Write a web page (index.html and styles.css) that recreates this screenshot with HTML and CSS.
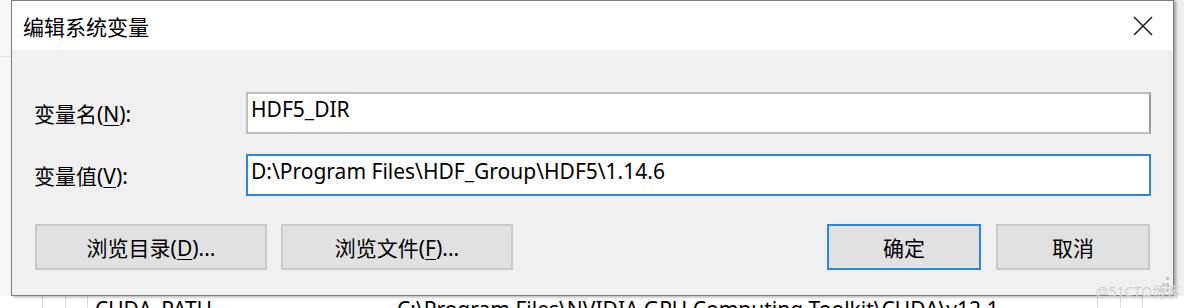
FILE: index.html
```html
<!DOCTYPE html>
<html lang="zh-CN">
<head>
<meta charset="utf-8">
<title>编辑系统变量</title>
<link rel="stylesheet" href="styles.css">
</head>
<body>
<div class="desk">
  <div class="side"></div>
  <div class="dialog">
    <div class="titlebar">
      <span class="title">编辑系统变量</span>
      <span class="close">
        <svg width="20" height="20" viewBox="0 0 20 20"><path d="M1 1 L19 19 M19 1 L1 19" stroke="#1a1a1a" stroke-width="1.5" fill="none"/></svg>
      </span>
    </div>
    <div class="body">
      <div class="form">
        <label class="lbl">变量名(<u>N</u>):</label>
        <div class="field">HDF5_DIR</div>
        <label class="lbl">变量值(<u>V</u>):</label>
        <div class="field focused">D:\Program Files\HDF_Group\HDF5\1.14.6</div>
      </div>
      <div class="buttons">
        <button class="btn wide">浏览目录(<u>D</u>)...</button>
        <button class="btn wide">浏览文件(<u>F</u>)...</button>
        <span class="spacer"></span>
        <button class="btn narrow default">确定</button>
        <button class="btn narrow">取消</button>
      </div>
    </div>
    <svg class="grip" width="12" height="16" viewBox="0 0 12 16">
      <rect x="8" y="0" width="3" height="3" fill="#c4c4c4"/>
      <rect x="8" y="6" width="3" height="3" fill="#c4c4c4"/>
      <rect x="4" y="6" width="3" height="3" fill="#c4c4c4"/>
      <rect x="8" y="12" width="3" height="3" fill="#c4c4c4"/>
      <rect x="4" y="12" width="3" height="3" fill="#c4c4c4"/>
      <rect x="0" y="12" width="3" height="3" fill="#c4c4c4"/>
    </svg>
    <span class="watermark">@51CTO博客</span>
  </div>
  <div class="gap"></div>
</div>
<div class="list-row">
  <span class="cell c1"></span>
  <span class="cell c2"></span>
  <span class="cell c3"></span>
  <span class="name">CUDA_PATH</span>
  <span class="value">C:\Program Files\NVIDIA GPU Computing Toolkit\CUDA\v12.1</span>
  <span class="cell c4"></span>
  <span class="cell c5"></span>
  <span class="cell c6"></span>
</div>
</body>
</html>
```
FILE: styles.css
```css
* { box-sizing: border-box; }
html, body {
  margin: 0;
  padding: 0;
  width: 1184px;
  height: 308px;
  overflow: hidden;
  background: #f4f4f4;
  font-family: "Noto Sans", "Noto Sans CJK SC", sans-serif;
  color: #000;
}
.desk {
  display: flex;
  height: 296px;
}
.side {
  width: 11px;
  background: #f7f7f7;
  background-image: linear-gradient(#e4e4e4, #e4e4e4);
  background-size: 100% 1px;
  background-position: 0 56px;
  background-repeat: no-repeat;
}
.gap {
  flex: 1;
  background: #efefef;
}
.dialog {
  position: relative;
  width: 1163px;
  height: 296px;
  border: 1px solid #7d7d7d;
  background: #f0f0f0;
  box-shadow: 2px 1px 3px rgba(0,0,0,0.35);
  display: flex;
  flex-direction: column;
  z-index: 1;
}
.titlebar {
  height: 49px;
  background: #fff;
  display: flex;
  align-items: center;
  padding-left: 11px;
  padding-right: 20px;
}
.title {
  font-size: 21px;
  flex: 1;
  color: #000;
}
.close {
  display: flex;
  width: 20px;
  height: 20px;
}
.body {
  padding: 42px 21px 0 22px;
}
.form {
  display: grid;
  grid-template-columns: 212px 905px;
  row-gap: 20px;
  align-items: center;
}
.lbl {
  font-size: 21px;
  line-height: 26px;
  padding-top: 2px;
}
u { text-underline-offset: 3px; text-decoration-thickness: 1px; }
.field {
  height: 42px;
  background: #fff;
  border: 2px solid #bdbdbd;
  border-right-color: #9d9d9d;
  font-size: 21px;
  line-height: 30px;
  padding: 0 3px;
  white-space: nowrap;
}
.field.focused {
  border: 2px solid #2589e3;
}
.buttons {
  display: flex;
  margin-top: 28px;
  padding-left: 1px;
  padding-right: 2px;
  height: 46px;
}
.btn {
  height: 46px;
  background: #e1e1e1;
  border: 2px solid #c9c9c9;
  font-family: inherit;
  font-size: 21px;
  color: #000;
  padding: 0;
  margin: 0;
}
.btn.wide { width: 232px; }
.btn.wide + .btn.wide { margin-left: 14px; }
.btn.narrow { width: 154px; }
.btn.narrow + .btn.narrow { margin-left: 15px; }
.btn.default { border-color: #2589e3; }
.spacer { flex: 1; }
.grip {
  position: absolute;
  right: 3px;
  bottom: 2px;
}
.watermark {
  position: absolute;
  left: 1084px;
  top: 283px;
  font-size: 14px;
  line-height: 16px;
  color: #cdcdcd;
  white-space: nowrap;
  text-shadow: 0 0 1px #fff;
}
.list-row {
  position: relative;
  height: 12px;
  background: #fff;
  overflow: hidden;
  display: flex;
  font-size: 21px;
  line-height: 21px;
  padding-top: 3px;
  white-space: nowrap;
  color: #000;
}
.cell {
  position: absolute;
  top: 0;
  bottom: 0;
  width: 1px;
  background: #d9d9d9;
}
.c1 { left: 42px; }
.c2 { left: 65px; }
.c3 { left: 87px; }
.c4 { left: 1097px; }
.c5 { left: 1120px; }
.c6 { left: 1142px; }
.name { margin-left: 95px; width: 302px; }
```
